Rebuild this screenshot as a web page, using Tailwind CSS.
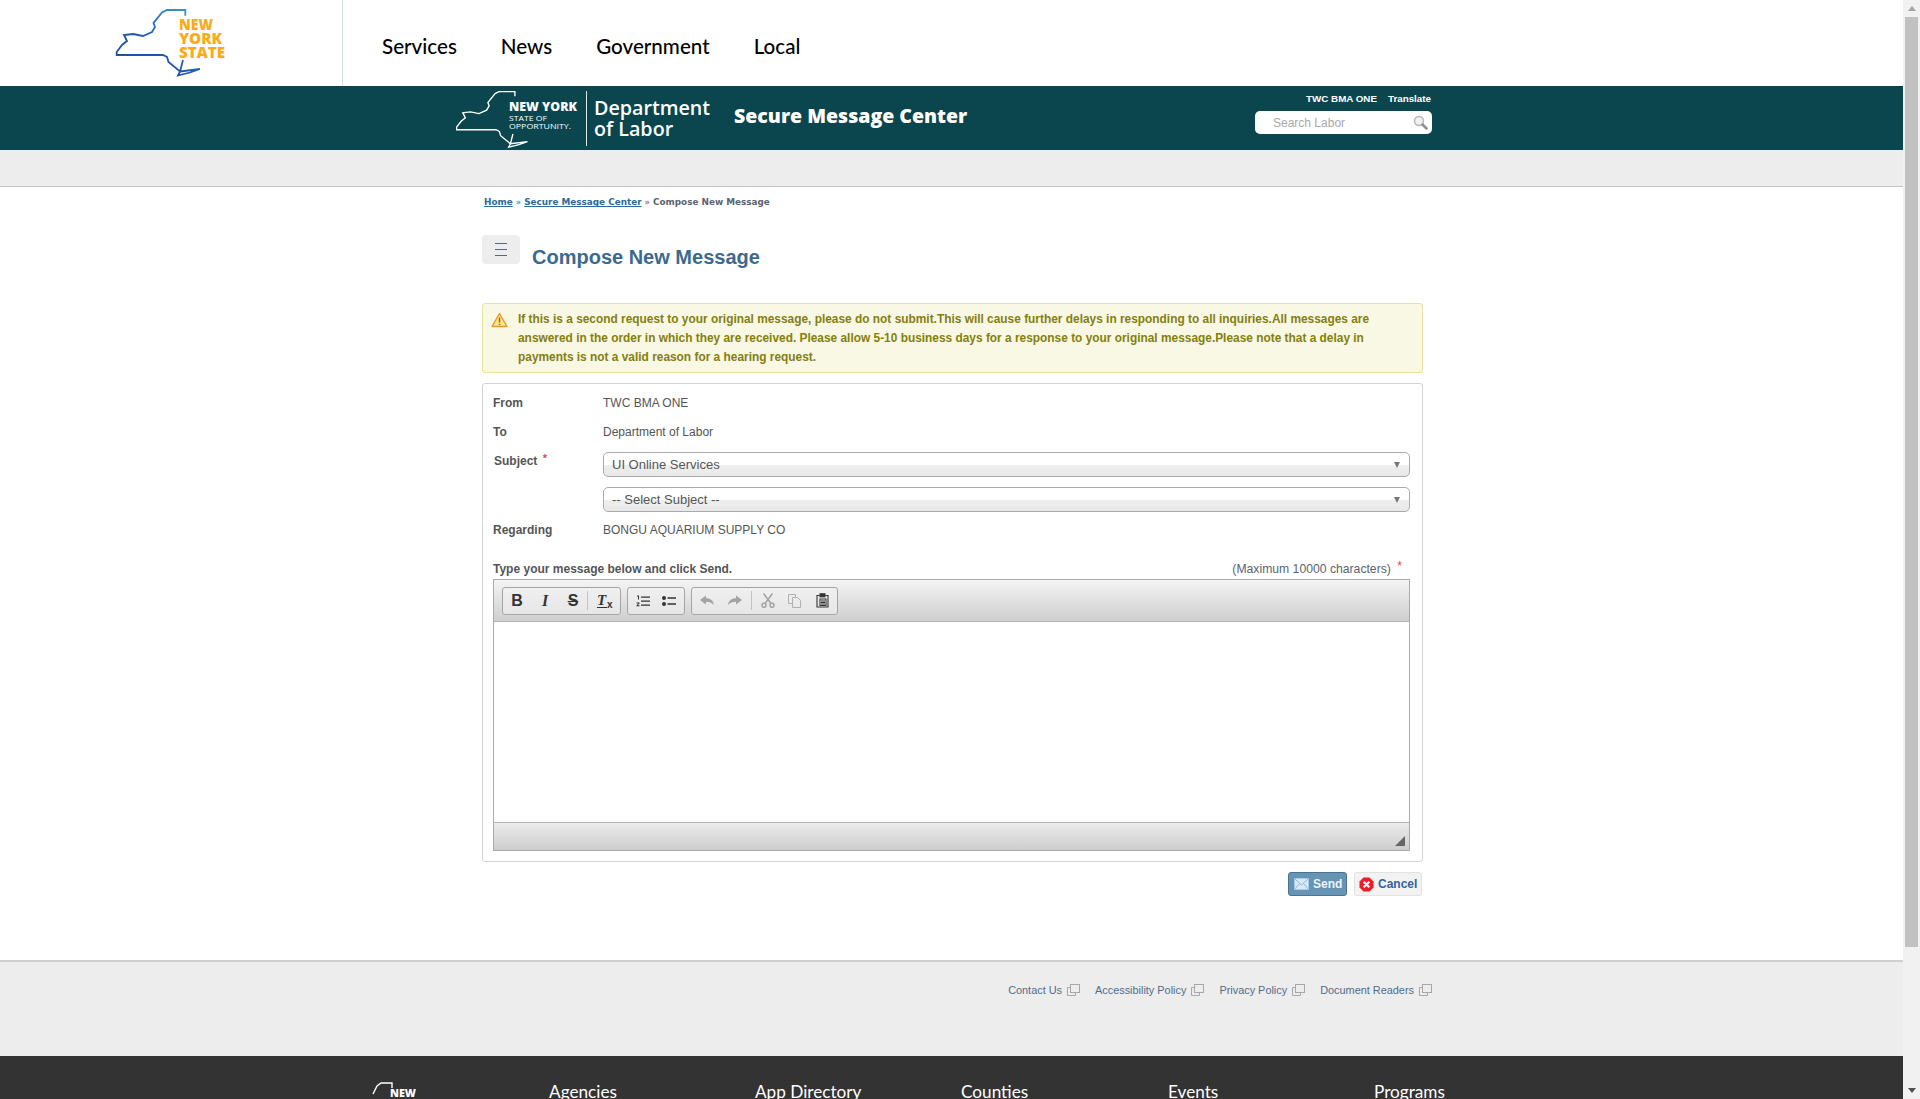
<!DOCTYPE html>
<html lang="en">
<head>
    <meta charset="UTF-8">
    <title>Compose New Message</title>
    <script src="https://cdn.jsdelivr.net/npm/@tailwindcss/browser@4"></script>
</head>
<body class="bg-white font-['Liberation_Sans',Arial,sans-serif]">
<div class="flex h-[1099px] overflow-hidden">
    <div class="w-[1903px] shrink-0">
        <!-- state nav -->
        <header class="flex h-[86px] bg-white">
            <div class="w-[343px] border-r border-[#d5dfdf]">
                <svg class="ml-[100px]" width="140" height="85" viewBox="0 0 140 85">
                    <defs>
                        <linearGradient id="nysBlue" x1="1" y1="0" x2="0" y2="1">
                            <stop offset="0" stop-color="#3aa0dc"/>
                            <stop offset="0.6" stop-color="#1d55a8"/>
                            <stop offset="1" stop-color="#1d4fa0"/>
                        </linearGradient>
                    </defs>
                    <path d="M85.3 15.7V10H67L62 12.5 53.5 23 55 27 52 32 43 36 33 34 24 35 27 41 22 45 16.7 52V55H63L67 57 68.5 62 80 71.5 83 60M80 71.5L100 69 90 72.5 78 75.5Z" fill="none" stroke="url(#nysBlue)" stroke-width="1.8"/>
                    <g fill="#fbab18" font-family="Open Sans, sans-serif" font-weight="800" font-size="16.500">
                        <text x="79" y="30" textLength="34" lengthAdjust="spacingAndGlyphs">NEW</text>
                        <text x="79" y="44" textLength="43" lengthAdjust="spacingAndGlyphs">YORK</text>
                        <text x="79" y="58" textLength="46" lengthAdjust="spacingAndGlyphs">STATE</text>
                    </g>
                </svg>
            </div>
            <nav class="flex items-center gap-[44px] pl-[39px] pt-[7px] font-['Lato',sans-serif] text-[20.600px] font-medium text-black">
                <a>Services</a>
                <a>News</a>
                <a>Government</a>
                <a>Local</a>
            </nav>
        </header>

        <!-- agency banner -->
        <div class="flex h-[64px] bg-[#0b464e] pl-[456px] text-white">
            <svg class="mt-[5px] shrink-0" width="122" height="58" viewBox="0 0 122 58">
                <g transform="translate(-13.6 -8) scale(0.85)">
                    <path d="M85.3 15.7V10H67L62 12.5 53.5 23 55 27 52 32 43 36 33 34 24 35 27 41 22 45 16.7 52V55H63L67 57 68.5 62 80 71.5 83 60M80 71.5L100 69 90 72.5 78 75.5Z" fill="none" stroke="#fff" stroke-width="1.6"/>
                </g>
                <g fill="#fff" font-family="Open Sans, sans-serif">
                    <text x="53" y="20" font-size="12" font-weight="800" textLength="68" lengthAdjust="spacingAndGlyphs">NEW YORK</text>
                    <text x="53" y="29.500" font-size="8" textLength="38" lengthAdjust="spacingAndGlyphs">STATE OF</text>
                    <text x="53" y="38" font-size="8" textLength="62" lengthAdjust="spacingAndGlyphs">OPPORTUNITY.</text>
                </g>
            </svg>
            <div class="mt-[5px] ml-[8px] h-[55px] w-[1px] bg-[#dfe8e8]"></div>
            <div class="ml-[7px] mt-[11px] w-[125px] font-['Open_Sans',sans-serif] text-[19.700px] font-semibold leading-[21px]">Department<br>of Labor</div>
            <div class="ml-[15px] mt-[17px] font-['Open_Sans',sans-serif] text-[19.500px] font-extrabold leading-[26px]">Secure Message Center</div>
            <div class="ml-auto mr-[471px] flex w-[177px] flex-col items-end pt-[7px]">
                <div class="flex gap-[11px] pr-[1px] text-[9.800px] font-bold leading-[12px]">
                    <a>TWC BMA ONE</a>
                    <a>Translate</a>
                </div>
                <div class="mt-[6px] flex h-[23px] w-[177px] items-center justify-between rounded-[5px] bg-white pl-[18px] pr-[4px]">
                    <span class="text-[12px] text-[#a9a9a9]">Search Labor</span>
                    <svg width="15" height="15" viewBox="0 0 15 15">
                        <circle cx="6" cy="6" r="4.500" fill="#f1f1f1" stroke="#b5b5b5" stroke-width="1.500"/>
                        <path d="M9.500 9.500L13.500 13.500" stroke="#8f8f8f" stroke-width="2.500" stroke-linecap="round"/>
                    </svg>
                </div>
            </div>
        </div>

        <div class="h-[37px] border-b border-[#c4c4c4] bg-[#ededed]"></div>

        <main class="ml-[482px] w-[941px]">
            <div class="flex h-[28px] items-center pl-[2px] pt-[4px] font-['DejaVu_Sans',sans-serif] text-[8.850px] font-bold text-[#5a6470]">
                <a class="text-[#2f6a96] underline">Home</a>
                <span class="mx-[3px] font-normal">»</span>
                <a class="text-[#2f6a96] underline">Secure Message Center</a>
                <span class="mx-[3px] font-normal">»</span>
                <span>Compose New Message</span>
            </div>

            <div class="mt-[20px] flex h-[68px] items-start">
                <button class="flex h-[29px] w-[38px] flex-col items-center justify-center gap-[5px] rounded-[4px] bg-[#ededed]">
                    <span class="h-[1px] w-[12px] bg-[#53687a]"></span>
                    <span class="h-[1px] w-[12px] bg-[#53687a]"></span>
                    <span class="h-[1px] w-[12px] bg-[#53687a]"></span>
                </button>
                <h1 class="ml-[12px] mt-[10px] text-[20px] font-bold leading-[24px] text-[#3b6a8f]">Compose New Message</h1>
            </div>

            <!-- warning -->
            <div class="flex h-[70px] rounded-[3px] border border-[#e6e2a2] bg-[#f8f8e5] pl-[8px] pt-[6px] text-[11.900px] font-bold leading-[19px] text-[#857f0e]">
                <svg class="mt-[2px] shrink-0" width="17" height="16" viewBox="0 0 17 16">
                    <path d="M8.500 1.500L16 14.500H1Z" fill="#fde68a" stroke="#e59a2a" stroke-width="1.400" stroke-linejoin="round"/>
                    <path d="M8.500 5.500V10.500M8.500 11.700V13" stroke="#a8630f" stroke-width="1.500"/>
                </svg>
                <p class="ml-[10px] whitespace-nowrap">If this is a second request to your original message, please do not submit.This will cause further delays in responding to all inquiries.All messages are<br>answered in the order in which they are received. Please allow 5-10 business days for a response to your original message.Please note that a delay in<br>payments is not a valid reason for a hearing request.</p>
            </div>

            <!-- compose form -->
            <form class="mt-[10px] h-[479px] rounded-[3px] border border-[#d4d4d4] px-[10px] text-[12px] text-[#555]">
                <div class="flex h-[18px] mt-[10px] items-center"><label class="w-[110px] font-bold">From</label><span>TWC BMA ONE</span></div>
                <div class="flex h-[18px] mt-[11px] items-center"><label class="w-[110px] font-bold">To</label><span>Department of Labor</span></div>
                <div class="mt-[11px] flex">
                    <label class="w-[110px] pl-[1px] font-bold leading-[18px]">Subject <span class="relative -top-[3px] ml-[2px] text-[11px] text-[#e0474c]">*</span></label>
                    <div class="flex h-[25px] w-[807px] items-center justify-between rounded-[5px] border border-[#aaa] bg-[linear-gradient(#fff_50%,#efefef_52%,#e8e8e8)] pl-[8px] pr-[9px] text-[13px] text-[#555]">
                        <span>UI Online Services</span>
                        <span class="h-0 w-0 border-x-[3.500px] border-t-[6px] border-x-transparent border-t-[#777]"></span>
                    </div>
                </div>
                <div class="ml-[110px] mt-[10px] flex h-[25px] w-[807px] items-center justify-between rounded-[5px] border border-[#aaa] bg-[linear-gradient(#fff_50%,#efefef_52%,#e8e8e8)] pl-[8px] pr-[9px] text-[13px] text-[#555]">
                    <span>-- Select Subject --</span>
                    <span class="h-0 w-0 border-x-[3.500px] border-t-[6px] border-x-transparent border-t-[#777]"></span>
                </div>
                <div class="mt-[9px] flex h-[18px] items-center"><label class="w-[110px] font-bold">Regarding</label><span>BONGU AQUARIUM SUPPLY CO</span></div>

                <div class="mt-[21px] flex h-[18px] items-center justify-between pr-[10px]">
                    <label class="font-bold">Type your message below and click Send.</label>
                    <span class="text-[12.200px] text-[#5b6470]">(Maximum 10000 characters) <span class="relative -top-[3px] ml-[3px] text-[#e0474c]">*</span></span>
                </div>

                <!-- editor -->
                <div class="mt-[1px] h-[272px] w-[917px] border border-[#aaa]">
                    <div class="flex h-[42px] items-center gap-[6px] border-b border-[#b5b5b5] bg-[linear-gradient(#f4f4f4,#cfcfcf)] pl-[8px]">
                        <div class="flex h-[28px] w-[119px] items-center rounded-[3px] border border-[#a5a5a5] bg-[#f1f1f1]/60 text-[#333]">
                            <span class="w-[28px] text-center text-[16px] font-bold leading-none">B</span>
                            <span class="w-[28px] text-center font-['Liberation_Serif',serif] text-[16px] font-bold italic leading-none">I</span>
                            <span class="w-[28px] text-center text-[16px] font-bold leading-none line-through">S</span>
                            <span class="h-[19px] w-[1px] bg-[#c2c2c2]"></span>
                            <span class="relative ml-[9px] flex h-[16px] w-[15px]">
                                <span class="font-['Liberation_Serif',serif] text-[15px] font-bold italic leading-[14px]">T</span>
                                <span class="absolute left-0 top-[14px] h-[1px] w-[10px] bg-[#333]"></span>
                                <span class="absolute left-[10px] top-[7px] text-[10px] font-bold leading-[10px]">x</span>
                            </span>
                        </div>
                        <div class="flex h-[28px] w-[58px] items-center justify-around rounded-[3px] border border-[#a5a5a5] bg-[#f1f1f1]/60 px-[2px]">
                            <svg width="14" height="12" viewBox="0 0 14 12" fill="#333">
                                <path d="M5 1.500h9v1.300H5zM5 5.500h9v1.300H5zM5 9.500h9v1.300H5z"/>
                                <path d="M1 .5h2v4H2V1.500H1zM.5 7.500h3v.9L1.700 10.300h1.800v1H.5v-.9L2.300 8.500H.5z"/>
                            </svg>
                            <svg width="14" height="12" viewBox="0 0 14 12" fill="#333">
                                <circle cx="2" cy="3" r="2"/><circle cx="2" cy="9" r="2"/>
                                <path d="M5.500 2.300H14v1.400H5.500zM5.500 8.300H14v1.400H5.500z"/>
                            </svg>
                        </div>
                        <div class="flex h-[28px] w-[147px] items-center rounded-[3px] border border-[#a5a5a5] bg-[#f1f1f1]/60">
                            <svg class="ml-[8px]" width="14" height="11" viewBox="0 0 14 11" fill="#a3a3a3"><path d="M0 5L6 .5V3.200C10.500 3.200 13.500 5.500 14 10 11.800 7.700 9.500 6.800 6 6.800V9.500Z"/></svg>
                            <svg class="ml-[14px]" width="14" height="11" viewBox="0 0 14 11" fill="#a3a3a3"><path d="M14 5L8 .5V3.200C3.500 3.200 .5 5.500 0 10 2.200 7.700 4.500 6.800 8 6.800V9.500Z"/></svg>
                            <span class="ml-[9px] h-[19px] w-[1px] bg-[#c2c2c2]"></span>
                            <svg class="ml-[9px]" width="14" height="15" viewBox="0 0 14 15" fill="none" stroke="#a3a3a3" stroke-width="1.500"><path d="M2.500 .5L10 10.500M11.500 .5L4 10.500"/><circle cx="3" cy="12.200" r="2"/><circle cx="11" cy="12.200" r="2"/></svg>
                            <svg class="ml-[13px]" width="13" height="14" viewBox="0 0 13 14" fill="none" stroke="#b0b0b0"><path d="M7.500 3.500V.5H.5V9.500H4.500"/><path d="M4.500 3.500H9.500L12.500 6.500V13.500H4.500Z"/></svg>
                            <svg class="ml-[15px]" width="13" height="15" viewBox="0 0 13 15" fill="none" stroke="#333" stroke-width="1.100"><path d="M3.500 2.500H1V14H12V2.500H9.500"/><rect x="4" y=".8" width="5" height="3" fill="#333"/><path d="M4 6H10V12.500H4ZM5 8H9M5 9.500H9M5 11H9"/></svg>
                        </div>
                    </div>
                    <div class="h-[200px] bg-white"></div>
                    <div class="flex h-[28px] items-end justify-end border-t border-[#b5b5b5] bg-[linear-gradient(#ececec,#cdcdcd)] pb-[4px] pr-[4px]">
                        <span class="h-0 w-0 border-b-[10px] border-l-[10px] border-b-[#666] border-l-transparent"></span>
                    </div>
                </div>
            </form>

            <div class="mt-[10px] flex justify-end gap-[7px] pr-[1px] text-[12px] font-bold">
                <button class="flex h-[24px] w-[59px] items-center gap-[4px] rounded-[3px] border border-[#4a7291] bg-[#6594b5] pl-[5px] text-[#eef5fa]">
                    <svg width="15" height="12" viewBox="0 0 15 12"><rect x=".5" y=".5" width="14" height="11" fill="#d8e9f6" stroke="#a9cde6"/><path d="M.5 .5L7.500 7 14.500 .5M.5 11.500L5.500 5.500M14.500 11.500L9.500 5.500" fill="none" stroke="#8db8d8"/></svg>
                    Send
                </button>
                <button class="flex h-[24px] w-[68px] items-center gap-[4px] rounded-[3px] border border-[#e2e2e2] bg-[#f2f2f2] pl-[4px] text-[#37629a]">
                    <svg width="15" height="15" viewBox="0 0 15 15"><path d="M4.500 .5H10.500L14.500 4.500V10.500L10.500 14.500H4.500L.5 10.500V4.500Z" fill="#ee1c25"/><path d="M4.700 4.700L10.300 10.300M10.300 4.700L4.700 10.300" stroke="#fff" stroke-width="2.200"/></svg>
                    Cancel
                </button>
            </div>
        </main>

        <!-- page footer -->
        <footer class="mt-[64px] h-[96px] border-t-2 border-[#cfcfcf] bg-[#ededed]">
            <div class="flex justify-end gap-[15px] pr-[471px] pt-[21px] text-[10.900px] leading-[14px] text-[#4f6c8c]">
                <a class="flex items-center gap-[5px]">Contact Us
                    <svg width="13" height="12" viewBox="0 0 13 12" fill="none" stroke="#a8a8a8"><path d="M3.500 3.500H.5V11.500H8.500V8.500"/><rect x="3.500" y=".5" width="9" height="8"/></svg>
                </a>
                <a class="flex items-center gap-[5px]">Accessibility Policy
                    <svg width="13" height="12" viewBox="0 0 13 12" fill="none" stroke="#a8a8a8"><path d="M3.500 3.500H.5V11.500H8.500V8.500"/><rect x="3.500" y=".5" width="9" height="8"/></svg>
                </a>
                <a class="flex items-center gap-[5px]">Privacy Policy
                    <svg width="13" height="12" viewBox="0 0 13 12" fill="none" stroke="#a8a8a8"><path d="M3.500 3.500H.5V11.500H8.500V8.500"/><rect x="3.500" y=".5" width="9" height="8"/></svg>
                </a>
                <a class="flex items-center gap-[5px]">Document Readers
                    <svg width="13" height="12" viewBox="0 0 13 12" fill="none" stroke="#a8a8a8"><path d="M3.500 3.500H.5V11.500H8.500V8.500"/><rect x="3.500" y=".5" width="9" height="8"/></svg>
                </a>
            </div>
        </footer>

        <!-- state footer -->
        <div class="flex h-[43px] overflow-hidden bg-[#333] pl-[369px] pt-[26px] font-['Lato',sans-serif] text-[17.200px] leading-[20px] text-white">
            <svg class="w-[180px] shrink-0" height="30" viewBox="0 0 180 30">
                <path d="M23 6V1H12L8 4 4 12" fill="none" stroke="#fff" stroke-width="1.400"/>
                <text x="21" y="15" fill="#fff" font-family="Open Sans, sans-serif" font-weight="800" font-size="10.500" textLength="26" lengthAdjust="spacingAndGlyphs">NEW</text>
            </svg>
            <a class="w-[206px]">Agencies</a>
            <a class="w-[206px]">App Directory</a>
            <a class="w-[207px]">Counties</a>
            <a class="w-[206px]">Events</a>
            <a>Programs</a>
        </div>
    </div>

    <!-- scrollbar -->
    <div class="flex w-[17px] shrink-0 flex-col items-center bg-[#f1f1f1]">
        <div class="flex h-[17px] items-center"><span class="h-0 w-0 border-x-[4px] border-b-[5px] border-x-transparent border-b-[#a3a3a3]"></span></div>
        <div class="h-[930px] w-[13px] bg-[#c1c1c1]"></div>
        <div class="mt-auto flex h-[17px] items-center"><span class="h-0 w-0 border-x-[4px] border-t-[5px] border-x-transparent border-t-[#505050]"></span></div>
    </div>
</div>
</body>
</html>
